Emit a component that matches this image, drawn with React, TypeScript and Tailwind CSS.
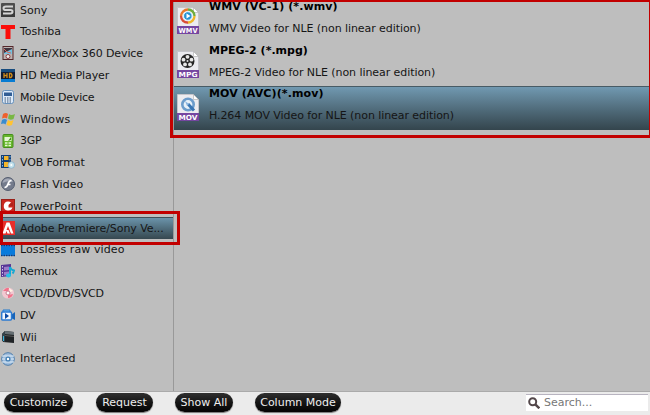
import { ReactNode } from "react";

interface Device {
  name: string;
  tracking?: string;
  icon: ReactNode;
}

interface Format {
  tag: string;
  title: string;
  titleTracking: string;
  description: string;
  art: ReactNode;
}

const devices: Device[] = [
  {
    name: "Sony",
    icon: (
      <>
        <rect width="14" height="14" rx="1" fill="#4d4d4d" />
        <rect y="8" width="14" height="6" fill="#3a3a3a" />
        <path d="M12 3.500H5Q2.500 3.500 2.500 5.300T5 7h4.500q2 0 2 1.700T9.500 10.500H2" fill="none" stroke="#d4d4d4" strokeWidth="2" />
      </>
    ),
  },
  {
    name: "Toshiba",
    icon: <path d="M0 0h14v4H9.500v10h-5V4H0z" fill="#fb0d09" />,
  },
  {
    name: "Zune/Xbox 360 Device",
    tracking: "tracking-[-0.1px]",
    icon: (
      <>
        <rect x="2" y=".5" width="10" height="13" fill="#bdb4b2" stroke="#54272b" />
        <rect x="3" y="2" width="8" height="6" fill="#40343f" />
        <path d="M3 7l4-2 4-2v5H3z" fill="#75c1df" />
        <path d="M3 3l3 3 4 1" stroke="#dc6759" fill="none" />
        <circle cx="7" cy="10.500" r="2" fill="#eee" stroke="#8b3f42" />
      </>
    ),
  },
  {
    name: "HD Media Player",
    tracking: "tracking-[-0.13px]",
    icon: (
      <>
        <rect y="1" width="14" height="13" fill="#101c35" />
        <rect y="1" width="14" height="3" fill="#174c7e" />
        <rect y="11" width="14" height="3" fill="#087cd2" />
        <path d="M3 5v5M6 5v5M3 7.500h3M8.500 5.500h1.500q2 2 0 4H8.500z" fill="none" stroke="#cf8b19" strokeWidth="1.300" />
      </>
    ),
  },
  {
    name: "Mobile Device",
    tracking: "tracking-[-0.22px]",
    icon: (
      <>
        <rect x="1.500" y=".5" width="11" height="13" rx="2" fill="#dceafa" stroke="#6791bc" />
        <rect x="3" y="2.500" width="8" height="3.500" fill="#315d94" />
        <path d="M3.500 8h7M3.500 10h7M3.500 12h7" stroke="#39516d" strokeDasharray="1.500 1" />
      </>
    ),
  },
  {
    name: "Windows",
    tracking: "tracking-[0.18px]",
    icon: (
      <>
        <path d="M2 2q3-2 5 0L6 6.500Q4 5 1 6.500z" fill="#ef602c" />
        <path d="M8 2q2 2 6 0l-1.500 5Q9 8.500 7 6.500z" fill="#79b744" />
        <path d="M1 8q3-2 5 0l-1.500 4.500Q3 11 0 12z" fill="#398ccf" />
        <path d="M7 8q2 2 5.500 0L11 13q-3 1.500-5.500 0z" fill="#ffc333" />
      </>
    ),
  },
  {
    name: "3GP",
    tracking: "tracking-[-0.2px]",
    icon: (
      <>
        <rect x="2" y=".5" width="10" height="13" rx="1" fill="#67b72c" stroke="#448d1c" />
        <rect x="3.500" y="3" width="7" height="4" fill="#e5f8d3" />
        <path d="M4 9h6M4 11.500h6" stroke="#e5f8d3" strokeWidth="1.500" strokeDasharray="2.500 1" />
        <path d="M10 3v3L7 7z" fill="#468e22" />
      </>
    ),
  },
  {
    name: "VOB Format",
    tracking: "tracking-[-0.12px]",
    icon: (
      <>
        <path d="M0 0h10v13H0z" fill="#163f73" />
        <path d="M3 1h4.500v4H3zM3 7h4.500v5H3z" fill="#f6b62a" />
        <path d="M1.500 1v12M9 1v12" stroke="#77b8ef" strokeDasharray="1.500 1.500" />
        <circle cx="10.300" cy="10" r="3.300" fill="#c5e2ec" stroke="#7eabc6" strokeWidth=".7" />
        <circle cx="10.300" cy="10" r="1" fill="#fff" />
      </>
    ),
  },
  {
    name: "Flash Video",
    icon: (
      <>
        <circle cx="7" cy="7" r="6.500" fill="#747b8c" stroke="#555e70" />
        <path d="M1.500 6A5.500 5.500 0 0 1 12 5Q7 3 1.500 6z" fill="#a4a9b6" />
        <path d="M3.500 10.500Q6 10.500 7 7t3.500-3.500M6.500 7.500h3" stroke="#fff" strokeWidth="1.700" fill="none" />
      </>
    ),
  },
  {
    name: "PowerPoint",
    tracking: "tracking-[0.18px]",
    icon: (
      <>
        <rect x=".5" y=".5" width="13" height="13" fill="#c92820" stroke="#982018" />
        <path d="M7 2.500a4.500 4.500 0 1 0 4.500 6H7.500V6L10 3.500Q9 2.500 7 2.500z" fill="#fff" />
        <path d="M9 5l3-2v4H8z" fill="#af231c" />
      </>
    ),
  },
  {
    name: "Adobe Premiere/Sony Ve...",
    tracking: "tracking-[-0.08px]",
    icon: (
      <>
        <rect width="14" height="14" fill="#e72e2b" />
        <path d="M1.500 12.500L5.500 1.500h3l4 11H10L7 5 5.500 9h2l1.500 3.500H6.500L5.500 10l-1 2.500z" fill="#fff" />
      </>
    ),
  },
  {
    name: "Lossless raw video",
    tracking: "tracking-[0.1px]",
    icon: (
      <>
        <rect y="2" width="14" height="11" fill="#1681df" />
        <rect y="4" width="14" height="7" fill="#087bdc" />
        <path d="M0 2.500h14M0 12.500h14" stroke="#103c79" strokeWidth="1.500" strokeDasharray="1.500 1" />
      </>
    ),
  },
  {
    name: "Remux",
    tracking: "tracking-[-0.1px]",
    icon: (
      <>
        <path d="M0 1l10-1v12L0 13z" fill="#573696" />
        <path d="M3 3l5-.5V6L3 6.500zM3 8l5-.5V11l-5 .5z" fill="#9b7cc8" />
        <path d="M1.500 2v10" stroke="#d6c4ed" strokeDasharray="1.500 1.500" />
        <path d="M9 11V3q1 3 4 3.500-.5 2-1.500 3" fill="none" stroke="#16a9d4" strokeWidth="2" />
        <ellipse cx="7.500" cy="11.500" rx="2.500" ry="2" fill="#27c1e8" />
      </>
    ),
  },
  {
    name: "VCD/DVD/SVCD",
    tracking: "tracking-[-0.18px]",
    icon: (
      <>
        <ellipse cx="7" cy="7" rx="6" ry="5.500" fill="#f2c8d1" />
        <path d="M2 5Q5 1 8 2l-.5 3zM7 9l5-1q-1 4-5 4z" fill="#f1728a" />
        <path d="M8 2l4 3-3 1z" fill="#fff4e3" />
        <circle cx="7" cy="7" r="2" fill="#fff" stroke="#c57f91" />
      </>
    ),
  },
  {
    name: "DV",
    tracking: "tracking-[-0.3px]",
    icon: (
      <>
        <path d="M2 2h7v3H2z" fill="#7abcef" stroke="#247acd" />
        <path d="M10 7l4-3v8l-4-2z" fill="#1664ba" />
        <rect x=".7" y="4" width="9.800" height="8" rx="1" fill="#f2f8ff" stroke="#2c7bd2" strokeWidth="1.500" />
        <path d="M4 5l4 3-4 3z" fill="#0b4aa3" />
      </>
    ),
  },
  {
    name: "Wii",
    icon: (
      <>
        <path d="M1 4l3-3 9 1v11L2 12z" fill="#202427" />
        <path d="M4 1l9 1v3L4 4z" fill="#656e73" />
        <path d="M1 4l3-3v11l-3-1z" fill="#36434b" />
        <path d="M2.500 6v5" stroke="#36b8e1" />
        <path d="M4 5.500l9 1" stroke="#555" />
      </>
    ),
  },
  {
    name: "Interlaced",
    icon: (
      <>
        <circle cx="7" cy="7" r="6.300" fill="#9fbddd" stroke="#4b7ba9" />
        <path d="M1 4h12M1 7h12M1 10h12" stroke="#e0edf8" strokeWidth="1.200" />
        <circle cx="7" cy="7" r="2.600" fill="#4480b5" />
        <circle cx="7" cy="7" r="1.200" fill="#fff" />
      </>
    ),
  },
];

const formats: Format[] = [
  {
    tag: "WMV",
    title: "WMV (VC-1) (*.wmv)",
    titleTracking: "tracking-[0.08px]",
    description: "WMV Video for NLE (non linear edition)",
    art: (
      <g fill="none" strokeWidth="2.300">
        <path d="M4 9a7 7 0 0 1 7-6.500" stroke="#e8792d" />
        <path d="M11 2.500A6.500 6.500 0 0 1 17.500 9" stroke="#71ad3c" />
        <path d="M17.500 9A6.500 6.500 0 0 1 11 15.500" stroke="#efb629" />
        <path d="M11 15.500A6.500 6.500 0 0 1 4 9" stroke="#d94e38" />
        <circle cx="10.800" cy="9" r="4.300" fill="#2794d3" stroke="#e9f5fb" strokeWidth="1" />
        <path d="M9.500 6.500L13.500 9l-4 2.500z" fill="#fff" />
      </g>
    ),
  },
  {
    tag: "MPG",
    title: "MPEG-2 (*.mpg)",
    titleTracking: "tracking-normal",
    description: "MPEG-2 Video for NLE (non linear edition)",
    art: (
      <>
        <circle cx="10.500" cy="10" r="7" fill="#262626" />
        <circle cx="10.500" cy="5.800" r="1.900" fill="#e8e8e8" />
        <circle cx="6.500" cy="8.700" r="1.900" fill="#e8e8e8" />
        <circle cx="14.500" cy="8.700" r="1.900" fill="#e8e8e8" />
        <circle cx="8" cy="13.400" r="1.900" fill="#e8e8e8" />
        <circle cx="13" cy="13.400" r="1.900" fill="#e8e8e8" />
        <circle cx="10.500" cy="10" r="1" fill="#ddd" />
      </>
    ),
  },
  {
    tag: "MOV",
    title: "MOV (AVC)(*.mov)",
    titleTracking: "tracking-[0.1px]",
    description: "H.264 MOV Video for NLE (non linear edition)",
    art: (
      <>
        <circle cx="11" cy="10.500" r="5.700" fill="#e7f0f8" stroke="#6c9ccb" strokeWidth="2.600" />
        <path d="M11 10l6 6.500" stroke="#3975b3" strokeWidth="3" />
        <path d="M8 7l4 3-2 2z" fill="#8ab4df" />
      </>
    ),
  },
];

const DeviceRow = ({ device, selected }: { device: Device; selected: boolean }) => {
  return (
    <div
      className={
        selected
          ? "flex h-[21.8px] shrink-0 items-center gap-[5px] border-t border-[#3f5059] bg-linear-to-b from-[#6b94ab] to-[#364850] pl-px"
          : "flex h-[21.8px] shrink-0 items-center gap-[5px] pl-px"
      }
    >
      <svg width="14" height="14" viewBox="0 0 14 14" className="shrink-0">
        {device.icon}
      </svg>
      <span className={`whitespace-nowrap ${selected ? "pt-px" : "pt-[2px]"} ${device.tracking ?? ""}`}>
        {device.name}
      </span>
    </div>
  );
};

const FormatRow = ({ format, selected }: { format: Format; selected: boolean }) => {
  return (
    <div
      className={
        selected
          ? "flex h-[43.7px] shrink-0 gap-[10px] border-t border-[#485b65] bg-linear-to-b from-[#7199b1] to-[#34454d] pl-[3px]"
          : "flex h-[43.7px] shrink-0 gap-[10px] border-t border-transparent pl-[3px]"
      }
    >
      <svg width="22" height="27" viewBox="0 0 22 27" className="mt-[7px] shrink-0 overflow-visible">
        <path d="M.5.5h16l5 5v21H.5z" fill="#ececf0" stroke="#c5c5cb" />
        <path d="M16.500.5v5h5z" fill="#fff" stroke="#aaa" strokeWidth=".6" />
        {format.art}
        <rect y="19" width="22" height="8" fill="#7546a0" />
        <text
          x="11"
          y="25.500"
          textAnchor="middle"
          textLength="19"
          lengthAdjust="spacingAndGlyphs"
          fill="#fff"
          className="text-[7px] font-bold"
        >
          {format.tag}
        </text>
      </svg>
      <div className="flex flex-col whitespace-nowrap leading-[14px]">
        <p className={`font-bold text-black ${format.titleTracking}`}>{format.title}</p>
        <p className="mt-[8px] tracking-[-0.07px]">{format.description}</p>
      </div>
    </div>
  );
};

const PillButton = ({ text, className }: { text: string; className: string }) => {
  return (
    <button
      className={`h-[19px] shrink-0 rounded-full bg-linear-to-b from-[#303030] via-[#151515] to-[#050505] text-[11px] leading-[18px] whitespace-nowrap text-[#eee] shadow-[0_1px_1px_#777] ${className}`}
    >
      {text}
    </button>
  );
};

const App = () => {
  return (
    <div className="relative flex h-[415px] w-[650px] flex-col overflow-hidden bg-[#bebebe] font-['DejaVu_Sans',sans-serif] text-[11px] text-[#151515]">
      <div className="flex h-[392px] shrink-0 border-b border-[#aaa]">
        <aside className="flex w-[174px] shrink-0 flex-col border-r border-[#999]">
          <div className="-mt-px flex flex-col">
            {devices.map((device) => (
              <DeviceRow key={device.name} device={device} selected={device.name.startsWith("Adobe")} />
            ))}
          </div>
        </aside>
        <main className="min-w-0 flex-1">
          <div className="-mt-px flex flex-col">
            {formats.map((format) => (
              <FormatRow key={format.tag} format={format} selected={format.tag === "MOV"} />
            ))}
          </div>
        </main>
      </div>

      <footer className="flex h-[23px] shrink-0 items-start bg-[#ebebeb] pt-px pl-1">
        <PillButton text="Customize" className="w-[69px]" />
        <PillButton text="Request" className="ml-[23px] w-[57px]" />
        <PillButton text="Show All" className="ml-[22px] w-[58px]" />
        <PillButton text="Column Mode" className="ml-[22px] w-[86px]" />
        <label className="mt-px mr-[2px] ml-auto flex h-[17px] w-[122px] items-center gap-[4px] border-t border-[#b8b4c0] bg-white pl-[2px]">
          <svg width="12" height="12" viewBox="0 0 12 12" className="shrink-0">
            <circle cx="4.700" cy="4.700" r="3.500" fill="none" stroke="#53474a" strokeWidth="2" />
            <path d="M7.300 7.300l4 4" stroke="#53474a" strokeWidth="2.400" />
          </svg>
          <input
            placeholder="Search..."
            className="w-[90px] text-[11px] outline-none placeholder:text-[#777]"
          />
        </label>
      </footer>

      {/* red callouts over both lists */}
      <div className="pointer-events-none absolute top-[211px] left-0 h-[34px] w-[180px] border-[3px] border-[#c20000]" />
      <div className="pointer-events-none absolute top-0 left-[170px] h-[138px] w-[480px] border-t-2 border-r border-b-[3px] border-l-[3px] border-[#c20000]" />
    </div>
  );
};

export default App;
